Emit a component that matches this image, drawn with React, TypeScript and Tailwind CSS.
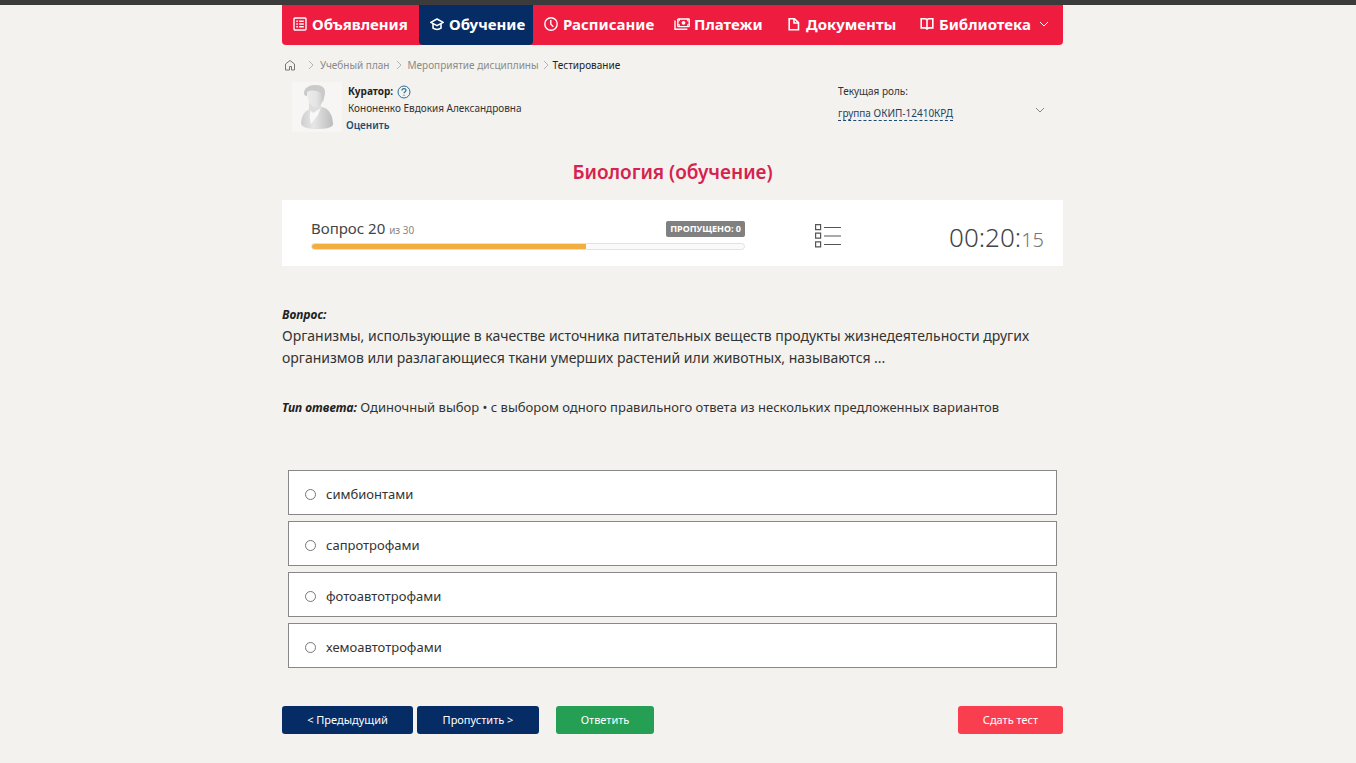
import { useState } from "react";

const NAV_ITEMS = [
  { label: "Объявления", icon: "news" },
  { label: "Обучение", icon: "cap", active: true },
  { label: "Расписание", icon: "clock" },
  { label: "Платежи", icon: "money" },
  { label: "Документы", icon: "doc" },
  { label: "Библиотека", icon: "book", menu: true },
];

const OPTIONS = ["симбионтами", "сапротрофами", "фотоавтотрофами", "хемоавтотрофами"];

const QUESTION = 20;
const TOTAL = 30;
const DONE = 19;

function NavIcon({ name }: { name: string }) {
  return (
    <svg
      className="size-4 shrink-0"
      viewBox="0 0 16 16"
      fill="none"
      stroke="currentColor"
      strokeWidth="1.4"
      aria-hidden="true"
    >
      {name === "news" && (
        <>
          <rect x="2" y="2" width="12" height="12" rx="1" />
          <path d="M4.3 5.2h1.6M7.2 5.2h4.6M4.3 8h1.6M7.2 8h4.6M4.3 10.8h1.6M7.2 10.8h4.6" />
        </>
      )}
      {name === "cap" && (
        <>
          <path d="M8 3 1.8 6.4 8 9.6l6.2-3.2L8 3Z" strokeWidth="1.6" strokeLinejoin="round" />
          <path d="M4 8v4.2c1.2.9 2.6 1.3 4 1.3s2.800-.4 4-1.300V8" strokeWidth="1.6" />
        </>
      )}
      {name === "clock" && (
        <>
          <circle cx="8" cy="8" r="6.2" />
          <path d="M7.800 4v4.200l2.600 2.500" />
        </>
      )}
      {name === "money" && (
        <>
          <rect x="3.800" y="3" width="11.400" height="7.600" rx=".6" />
          <path d="M1 4.600v8.600h12.300" />
          <circle cx="9.500" cy="6.800" r="1.900" fill="currentColor" stroke="none" />
          <path d="M5.500 3v2h-2M13.500 3v2h2M5.500 10.600v-2h-2M13.500 10.600v-2h2" strokeWidth=".8" />
        </>
      )}
      {name === "doc" && (
        <>
          <path d="M3.200 2.700h5.300l4 4v7.100H3.200V2.700Z" strokeWidth="1.6" />
          <path d="M8 2.700v4.300h4.500" strokeWidth="1.6" />
        </>
      )}
      {name === "book" && (
        <path
          d="M8 3.700C7.400 3 6.600 2.700 5.700 2.700H2.200v9.200h3.500c.9 0 1.700.3 2.300 1 .6-.7 1.400-1 2.300-1h3.500V2.700h-3.500c-.9 0-1.700.3-2.300 1Zm0 0v9.900"
          strokeWidth="1.6"
        />
      )}
    </svg>
  );
}

function Chevron({ className }: { className: string }) {
  return (
    <svg className={className} viewBox="0 0 10 10" fill="none" stroke="currentColor" aria-hidden="true">
      <path d="m1 3 4 4 4-4" />
    </svg>
  );
}

function Avatar() {
  return (
    <svg className="size-[50px] shrink-0" viewBox="0 0 50 50" role="img" aria-label="Куратор">
      <defs>
        <linearGradient id="suit" x1="0" x2="1">
          <stop offset="0" stopColor="#cfcfcf" />
          <stop offset=".4" stopColor="#e6e6e6" />
          <stop offset="1" stopColor="#bcbcbc" />
        </linearGradient>
        <linearGradient id="face" x1="0" x2="1">
          <stop offset="0" stopColor="#ececec" />
          <stop offset=".55" stopColor="#e4e4e4" />
          <stop offset="1" stopColor="#c8c8c8" />
        </linearGradient>
      </defs>
      <rect width="50" height="50" fill="#f7f6f4" />
      <path d="M9 42c0-7 3-13 9-15l12-2c7 1 11 9 11 18-2 3-8 4-16 4-9 0-15-2-16-5Z" fill="url(#suit)" />
      <path d="m19 27 10-2-3 8-7 9c-1-4-2-9 0-15Z" fill="#f8f8f8" />
      <path d="M17 20h12v6l-8 5-4-4v-7Z" fill="#dedede" />
      <path d="M15 9c1-5 5-6 9-6 6 0 8 4 8 9 0 8-4 13-8 13-6 0-9-7-9-16Z" fill="url(#face)" />
      <path d="M12 11c0-5 5-8 11-8 7 0 11 3 10 9l-2 8-2-9c-5-3-10-3-14-1v4c-2 0-3-1-3-3Z" fill="#cacaca" />
    </svg>
  );
}

function Breadcrumbs() {
  return (
    <nav aria-label="Навигация" className="flex h-10 items-center pl-0.5 text-[10px] text-[#8a8a8a]">
      <a href="#home" aria-label="Главная">
        <svg className="size-3" viewBox="0 0 12 12" fill="none" stroke="#777" aria-hidden="true">
          <path d="M1.500 5 6 1.500 10.500 5v6H7.500V7.500h-2V11h-4V5Z" strokeLinejoin="round" />
        </svg>
      </a>
      <Chevron className="mr-1 ml-2.5 size-2.5 -rotate-90 text-[#b5b5b5]" />
      <a href="#plan">Учебный план</a>
      <Chevron className="mx-1 size-2.5 -rotate-90 text-[#b5b5b5]" />
      <a href="#event">Мероприятие дисциплины</a>
      <Chevron className="mx-0.5 size-2.5 -rotate-90 text-[#b5b5b5]" />
      <span className="text-[#222]">Тестирование</span>
    </nav>
  );
}

export default function App() {
  const [answer, setAnswer] = useState("");

  return (
    <div className="min-h-screen bg-[#f3f2ee] pr-[11px] font-['Noto_Sans','Open_Sans',sans-serif] text-[#333]">
      <div className="-mr-[11px] h-[5px] bg-[#3b3b3b]" />
      <div className="mx-auto max-w-[781px] pb-7">
        <nav className="grid h-10 grid-cols-[137fr_114fr_131fr_112fr_133fr_154fr] overflow-hidden rounded-b bg-[#ee1c3f] text-white">
          {NAV_ITEMS.map((item) => (
            <a
              key={item.label}
              href="#nav"
              className={
                "flex items-center gap-1 pb-0.5 pl-2.5 text-[15px] font-bold whitespace-nowrap " +
                (item.active ? "rounded-b bg-[#062c66]" : "")
              }
            >
              <NavIcon name={item.icon} />
              {item.label}
              {item.menu && <Chevron className="ml-1 size-2.5" />}
            </a>
          ))}
        </nav>

        <Breadcrumbs />

        <section className="-mt-[3px] flex justify-between pl-2.5">
          <div className="flex gap-1">
            <Avatar />
            <div className="pt-px text-[10px] leading-[17px]">
              <div className="flex items-center gap-1 pl-0.5 font-bold text-[#222]">
                Куратор:
                <svg className="size-[14px]" viewBox="0 0 14 14" fill="none" stroke="#2a6f97" aria-hidden="true">
                  <circle cx="7" cy="7" r="6" />
                  <path d="M5 5.500c0-2.600 4-2.500 4-.2C9 6.700 7 6.700 7 8.300M7 9.700v1.100" strokeWidth="1.200" />
                </svg>
              </div>
              <div className="pl-0.5">Кононенко Евдокия Александровна</div>
              <a href="#rate" className="font-semibold text-[#1b4f7a]">
                Оценить
              </a>
            </div>
          </div>
          <div className="flex w-[225px] items-center justify-between pr-[18px] text-[10px]">
            <div className="h-full leading-[18px]">
              <div>Текущая роль:</div>
              <a href="#role" className="mt-1.5 inline-block border-b border-dashed border-[#1f4a6e] leading-[14px] text-[#1f3f63]">
                группа ОКИП-12410КРД
              </a>
            </div>
            <button type="button" aria-label="Сменить роль" className="pt-1 text-[#888]">
              <Chevron className="size-2.5" />
            </button>
          </div>
        </section>

        <h1 className="mt-[22px] text-center text-[19px] leading-8 font-semibold text-[#d6224f]">
          Биология (обучение)
        </h1>

        <section className="mt-3 flex h-[66px] items-center bg-white pr-[19px] pl-[29px]">
          <div className="w-[434px] pt-[3px]">
            <div className="flex items-end justify-between">
              <div className="text-[15px] leading-[18px] text-[#444]">
                Вопрос {QUESTION} <span className="text-[10px] text-[#888]">из {TOTAL}</span>
              </div>
              <div className="mb-0.5 rounded-xs bg-[#808080] px-1 text-[9px] leading-4 font-bold text-white">
                ПРОПУЩЕНО: 0
              </div>
            </div>
            <div className="mt-1 h-[7px] overflow-hidden rounded-sm border border-[#e2e2e2] bg-[#fafafa]">
              <div
                className="h-full bg-[#f3ae3f]"
                style={{ width: `${(DONE / TOTAL) * 100}%` }}
              />
            </div>
          </div>
          <button type="button" aria-label="Список вопросов" className="mt-1.5 ml-[70px]">
            <svg className="h-6 w-[26px]" viewBox="0 0 26 24" fill="none" stroke="#555" strokeWidth="1.200" aria-hidden="true">
              <path d="M.6.600h5v5h-5zM.6 9.200h5v5h-5zM.6 17.800h5v5h-5zM9 3.500h17M9 12h17M9 20.500h17" />
            </svg>
          </button>
          <div className="mt-2 ml-auto text-[26px] leading-9 font-light text-[#444]">
            00:20:<span className="text-xl text-[#777]">15</span>
          </div>
        </section>

        <section className="mt-[38px] text-sm leading-[22px]">
          <div className="text-xs leading-[21px] font-bold text-[#222] italic">Вопрос:</div>
          <p>
            Организмы, использующие в качестве источника питательных веществ продукты жизнедеятельности других
            организмов или разлагающиеся ткани умерших растений или животных, называются ...
          </p>
          <p className="mt-7 text-[13px] leading-[21px]">
            <span className="text-xs leading-[21px] font-bold text-[#222] italic">Тип ответа:</span> Одиночный выбор • с
            выбором одного правильного ответа из нескольких предложенных вариантов
          </p>
        </section>

        <form className="mt-[52px]" onSubmit={(e) => e.preventDefault()}>
          <div className="grid gap-1.5 px-1.5">
            {OPTIONS.map((option) => (
              <label
                key={option}
                className="flex h-[45px] items-center gap-2.5 border border-[#888] bg-white pt-1 pl-4 text-[13px]"
              >
                <input
                  type="radio"
                  name="answer"
                  value={option}
                  checked={answer === option}
                  onChange={() => setAnswer(option)}
                  className="size-[11px]"
                />
                {option}
              </label>
            ))}
          </div>

          <div className="mt-[38px] flex text-[11px] text-white">
            <button type="button" className="h-7 w-[131px] rounded-[3px] bg-[#062c66]">
              &lt; Предыдущий
            </button>
            <button type="button" className="ml-1 h-7 w-[122px] rounded-[3px] bg-[#062c66]">
              Пропустить &gt;
            </button>
            <button type="submit" className="ml-[17px] h-7 w-[98px] rounded-[3px] bg-[#259f53]">
              Ответить
            </button>
            <button type="button" className="ml-auto h-7 w-[105px] rounded-[3px] bg-[#f93e50]">
              Сдать тест
            </button>
          </div>
        </form>
      </div>
    </div>
  );
}
